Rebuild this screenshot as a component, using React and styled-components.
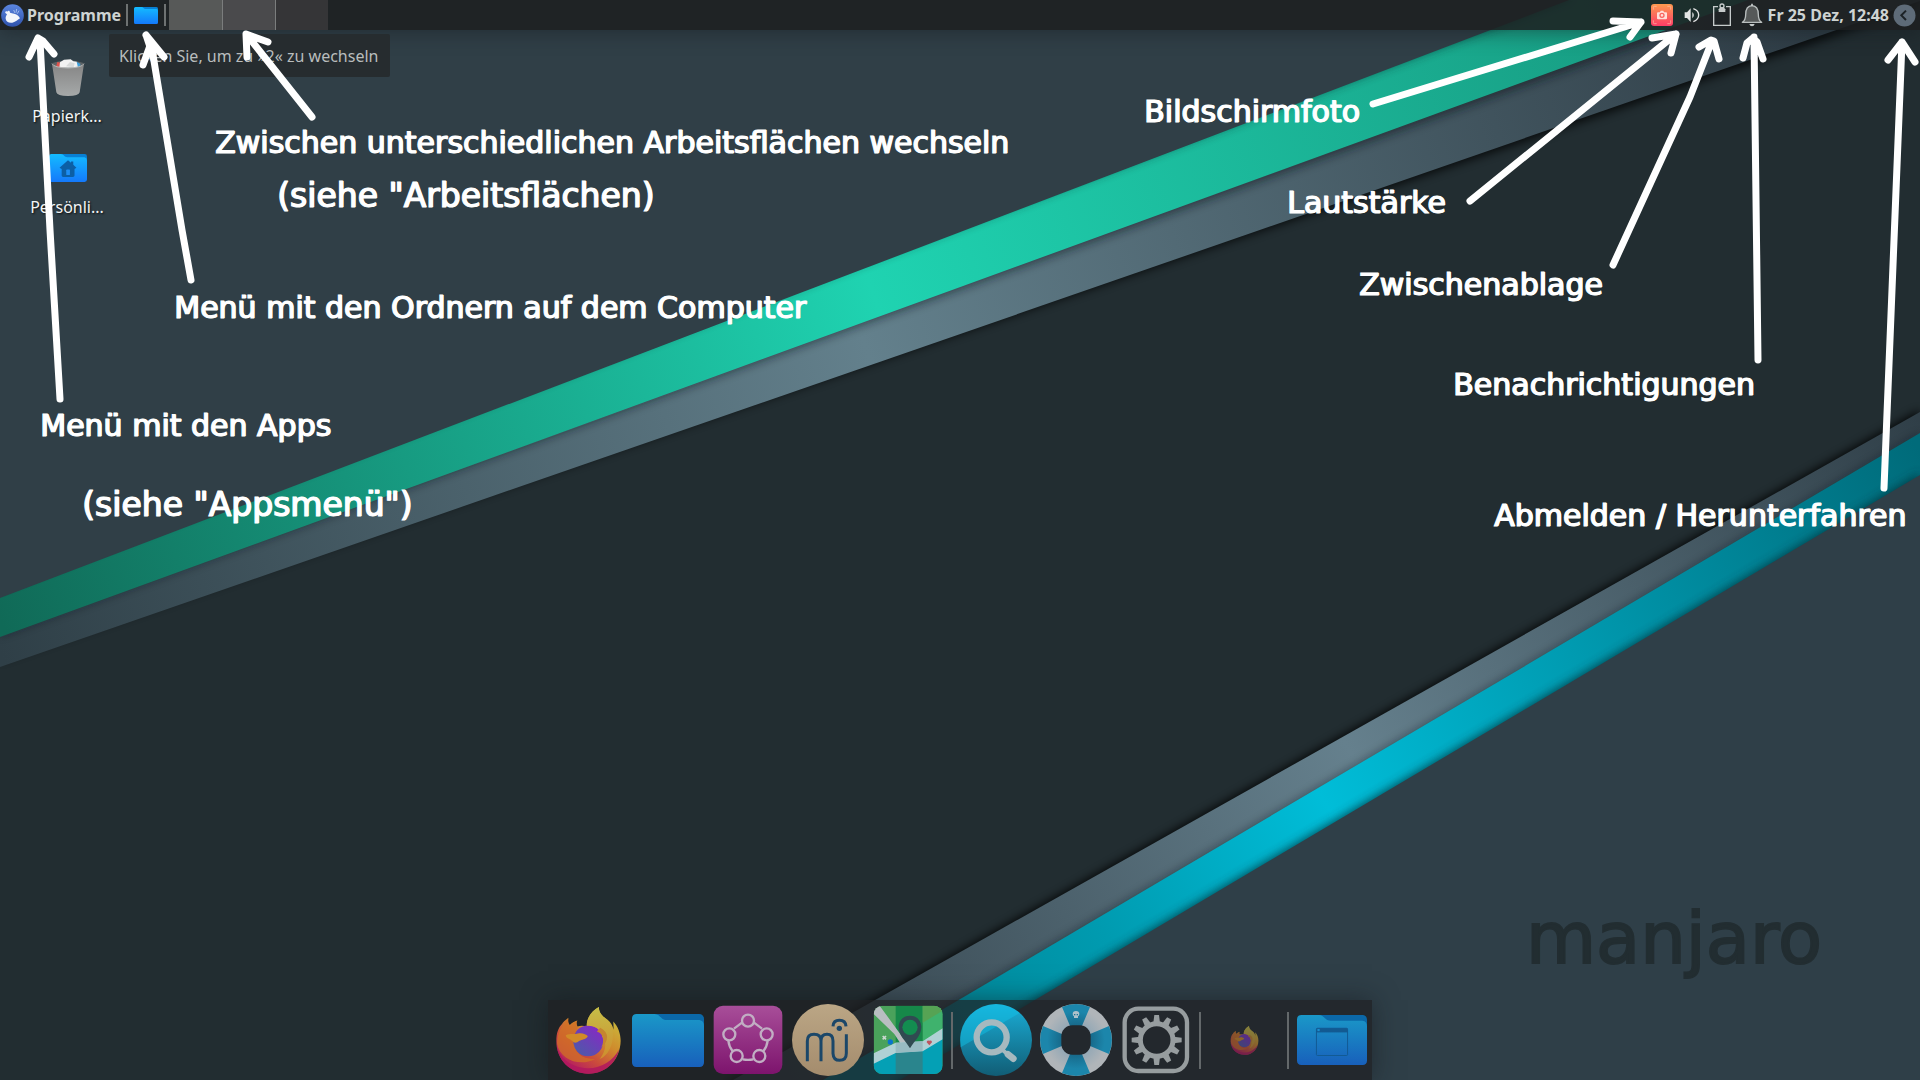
import React from 'react';
import styled, { createGlobalStyle } from 'styled-components';

const GlobalStyle = createGlobalStyle`
  * { box-sizing: border-box; }
  html, body, #root { height: 100%; }
  body { margin: 0; overflow: hidden; background: #222c30; font-family: "Noto Sans", "Open Sans", sans-serif; }
  button { font: inherit; color: inherit; background: none; border: 0; padding: 0; cursor: pointer; }
`;

const Screen = styled.div`
  position: relative;
  display: flex;
  flex-direction: column;
  width: 100%;
  height: 100vh;
  overflow: hidden;
`;

const WallpaperArt = styled.svg`
  position: absolute;
  inset: 0;
  width: 100%;
  height: 100%;
`;

const Wordmark = styled.div`
  position: absolute;
  right: 98px;
  bottom: 100px;
  font: 400 72px/84px "DejaVu Sans", sans-serif;
  color: #222d31;
  -webkit-text-stroke: 2px #222d31;
`;

const Panel = styled.header`
  position: relative;
  display: flex;
  align-items: center;
  height: 30px;
  background: rgba(29, 31, 32, 0.87);
  box-shadow: 0 2px 20px rgba(20, 26, 30, 0.5);
  color: #ced3d2;
  font-size: 16px;
  font-weight: 700;
  line-height: 22px;
  white-space: nowrap;
`;

const MenuButton = styled.button`
  display: flex;
  align-items: center;
  gap: 3px;
  padding: 0 5px 0 1px;
  height: 30px;
`;

const PanelRule = styled.span`
  width: 2px;
  height: 22px;
  background: #6e7272;
`;

const PlacesButton = styled.button`
  display: flex;
  align-items: center;
  justify-content: center;
  width: 36px;
  height: 30px;
`;

const Pager = styled.div`
  display: flex;
  height: 30px;
  margin-left: 3px;
`;

const Workspace = styled.button`
  width: 53px;
  height: 30px;
  background: ${(p) => p.$tone};
  & + & { border-left: 1px solid #7b7d7d; }
`;

const Tray = styled.div`
  display: flex;
  align-items: center;
  margin-left: auto;
  padding-right: 3px;
`;

const TrayButton = styled.button`
  display: flex;
  align-items: center;
  justify-content: center;
  width: 30px;
  height: 30px;
`;

const Clock = styled.button`
  height: 30px;
  padding: 0 4px 0 1px;
  font-weight: 700;
`;

const SessionButton = styled.button`
  display: flex;
  align-items: center;
  width: 24px;
  height: 30px;
`;

const Tooltip = styled.div`
  position: absolute;
  top: 34px;
  left: 109px;
  padding: 11px 12px 10px 10px;
  border-radius: 2px;
  background: #262c2f;
  color: #b9bdbd;
  font-size: 16px;
  line-height: 22px;
  white-space: nowrap;
`;

const DesktopArea = styled.main`
  position: relative;
  flex: 1;
  padding: 23px 12px;
`;

const IconColumn = styled.div`
  display: flex;
  flex-direction: column;
  gap: 17px;
  width: 110px;
`;

const DesktopItem = styled.button`
  display: flex;
  flex-direction: column;
  align-items: center;
  gap: 4px;
  color: #f3f5f5;
  font-size: 16px;
  line-height: 22px;
  text-shadow: 1px 1px 2px rgba(0, 0, 0, 0.8);
`;

const DockRow = styled.footer`
  position: relative;
  display: flex;
  justify-content: center;
`;

const Dock = styled.nav`
  display: flex;
  align-items: center;
  height: 80px;
  background: rgba(31, 32, 35, 0.72);
  box-shadow: 0 0 24px rgba(18, 22, 25, 0.5);
`;

const DockItem = styled.button`
  display: flex;
  align-items: center;
  justify-content: center;
  width: 80px;
  height: 80px;
  opacity: ${(p) => (p.$faded ? 0.6 : 1)};
`;

const DockRule = styled.span`
  width: 2px;
  height: 57px;
  margin: 0 3px;
  background: #63686a;
`;

const Notes = styled.section`
  position: absolute;
  top: 0;
  ${(p) => p.$side}: 0;
  width: ${(p) => p.$width}px;
  height: 540px;
  pointer-events: none;
`;

const Arrows = styled.svg`
  display: block;
  fill: none;
  stroke: #ffffff;
  stroke-width: 7;
  stroke-linecap: round;
  stroke-linejoin: round;
`;

const Note = styled.p`
  position: absolute;
  left: ${(p) => p.$x}px;
  top: ${(p) => p.$y}px;
  margin: 0;
  color: #ffffff;
  font-family: "DejaVu Sans", sans-serif;
  font-size: ${(p) => (p.$large ? 33 : 30)}px;
  line-height: ${(p) => (p.$large ? 40 : 36)}px;
  -webkit-text-stroke: 1px #ffffff;
  text-shadow: 1px 0 0 #ffffff;
  white-space: nowrap;
`;

function Wallpaper() {
  return (
    <WallpaperArt viewBox="0 0 1920 1080" preserveAspectRatio="xMidYMid slice" aria-hidden="true">
      <defs>
        <linearGradient id="green" gradientUnits="userSpaceOnUse" x1="0" y1="618" x2="1800" y2="-50">
          <stop offset="0" stopColor="#106a57" />
          <stop offset="0.485" stopColor="#1fd3b1" />
          <stop offset="1" stopColor="#169078" />
        </linearGradient>
        <linearGradient id="slateTop" gradientUnits="userSpaceOnUse" x1="0" y1="650" x2="1800" y2="10">
          <stop offset="0" stopColor="#2f3f47" />
          <stop offset="0.48" stopColor="#63808c" />
          <stop offset="1" stopColor="#2f3d46" />
        </linearGradient>
        <linearGradient id="teal" gradientUnits="userSpaceOnUse" x1="820" y1="1104" x2="1920" y2="453">
          <stop offset="0" stopColor="#007f90" />
          <stop offset="0.12" stopColor="#00899b" />
          <stop offset="0.26" stopColor="#009bb0" />
          <stop offset="0.46" stopColor="#00bdd8" />
          <stop offset="1" stopColor="#006b7a" />
        </linearGradient>
        <linearGradient id="slateLow" gradientUnits="userSpaceOnUse" x1="780" y1="1080" x2="1920" y2="423">
          <stop offset="0" stopColor="#33424b" />
          <stop offset="0.5" stopColor="#65808d" />
          <stop offset="1" stopColor="#303f48" />
        </linearGradient>
        <filter id="soft" filterUnits="userSpaceOnUse" x="-60" y="-60" width="2040" height="1200">
          <feGaussianBlur stdDeviation="5" />
        </filter>
      </defs>
      <rect width="1920" height="1080" fill="#222d31" />
      <path d="M0 660 L1920 7 V-50 H0Z" fill="#000" opacity="0.75" filter="url(#soft)" />
      <path d="M0 667 L1920 1 V0 H0Z" fill="url(#slateTop)" />
      <path d="M0 635 L1665 36 V-50 H0Z" fill="#10181c" opacity="0.55" filter="url(#soft)" />
      <path d="M0 637 L1748 0 H0Z" fill="url(#green)" />
      <path d="M0 588 L1568 0 V-50 H-50Z" fill="#10292a" opacity="0.6" filter="url(#soft)" />
      <path d="M0 598 L1569 0 H0Z" fill="#303f47" />
      <path d="M730 1080 L1920 410 V1150 H700Z" fill="#000" opacity="0.85" filter="url(#soft)" />
      <path d="M733 1080 L1920 412 V1080Z" fill="url(#slateLow)" />
      <path d="M822 1080 L1920 434 V1150 H780Z" fill="#10181c" opacity="0.5" filter="url(#soft)" />
      <path d="M823 1080 L1920 433 V1080Z" fill="url(#teal)" />
      <path d="M897 1080 L1920 473 V1150 H850Z" fill="#063740" opacity="0.8" filter="url(#soft)" />
      <path d="M900 1080 L1920 475 V1080Z" fill="#2f3f48" />
    </WallpaperArt>
  );
}

function XfceIcon() {
  return (
    <svg width="23" height="23" viewBox="0 0 69 69" aria-hidden="true">
      <defs>
        <linearGradient id="xfce" x1="0" y1="0" x2="0" y2="1">
          <stop offset="0" stopColor="#5b86e0" />
          <stop offset="1" stopColor="#2f52ab" />
        </linearGradient>
      </defs>
      <circle cx="34.500" cy="34.500" r="34" fill="url(#xfce)" />
      <path d="M14 28 C10 24 15 19 19 23 C21 19 27 20 27 26 L42 30 C50 32 54 38 57 43 C49 47 45 54 34 56 C24 58 15 53 14 44 C13 38 17 34 18 31Z" fill="#f3f6fb" />
      <path d="M38 18 l4 9 M47 15 l-2 11 M54 20 l-5 9" stroke="#9fb9ec" strokeWidth="3" fill="none" />
    </svg>
  );
}

function FolderIcon({ width, height, dim, children }) {
  const id = dim ? 'folderDim' : 'folder';
  return (
    <svg width={width} height={height} viewBox="0 0 216 158" preserveAspectRatio="none" aria-hidden="true">
      <defs>
        <linearGradient id={id} x1="0" y1="0" x2="0" y2="1">
          <stop offset="0" stopColor={dim ? '#1a98c8' : '#14bcff'} />
          <stop offset="1" stopColor={dim ? '#1860bb' : '#1479fb'} />
        </linearGradient>
      </defs>
      <rect x="60" y="0" width="156" height="90" rx="14" fill={dim ? '#0b68a8' : '#0880d4'} />
      <path d="M14 0 H68 C84 0 86 18 104 18 H202 Q216 20 216 36 V144 Q216 158 202 158 H14 Q0 158 0 144 V14 Q0 0 14 0Z" fill={`url(#${id})`} />
      {children}
    </svg>
  );
}

function TrashIcon() {
  return (
    <svg width="48" height="48" viewBox="-3 0 144 144" aria-hidden="true">
      <defs>
        <linearGradient id="bin" x1="0" y1="0" x2="0" y2="1">
          <stop offset="0" stopColor="#858585" />
          <stop offset="1" stopColor="#a6a9a9" />
        </linearGradient>
      </defs>
      <path d="M25 30 Q72 14 119 30 L117 44 H27Z" fill="#5d6366" />
      <path d="M36 42 L40 27 L54 30 L60 44Z" fill="#e0544f" />
      <path d="M92 42 L98 26 L109 32 L108 44Z" fill="#3f9ed8" />
      <path d="M46 44 L48 28 L60 20 L80 19 L88 25 L98 26 L102 44Z" fill="#f2f2f2" />
      <path d="M66 40 l12 -13 l14 4 l-3 12z" fill="#d7d9d9" />
      <path d="M24 32 Q30 44 72 45 Q114 44 120 32 L107 118 Q105 129 72 129 Q39 129 37 118Z" fill="url(#bin)" />
      <path d="M24 32 Q30 44 72 45 Q114 44 120 32" fill="none" stroke="#b5b8b8" strokeWidth="3" />
    </svg>
  );
}

function FirefoxIcon({ size, id }) {
  return (
    <svg width={size} height={size} viewBox="44 50 200 200" aria-hidden="true">
      <defs>
        <linearGradient id={`${id}body`} x1="0.850" y1="0.100" x2="0.250" y2="0.950">
          <stop offset="0" stopColor="#c9bd3d" />
          <stop offset="0.400" stopColor="#cf8a2c" />
          <stop offset="0.700" stopColor="#cb4b3c" />
          <stop offset="1" stopColor="#b41c62" />
        </linearGradient>
        <linearGradient id={`${id}flame`} x1="0" y1="0" x2="0" y2="1">
          <stop offset="0" stopColor="#c5be48" />
          <stop offset="1" stopColor="#cf8d2d" />
        </linearGradient>
        <linearGradient id={`${id}globe`} x1="0.900" y1="0.100" x2="0.200" y2="1">
          <stop offset="0" stopColor="#8629c5" />
          <stop offset="1" stopColor="#4c5ba8" />
        </linearGradient>
      </defs>
      <path d="M48 152 C48 128 54 112 65 101 C68 94 75 90 84 82 C82 92 84 98 88 104 C94 97 102 93 111 90 C107 96 108 101 111 108 C121 105 130 106 139 108 C137 84 155 60 175 50 C175 70 184 76 201 88 C210 95 216 105 219 118 L218 93 C232 107 240 130 240 151 C239 207 198 249 144 249 C90 249 48 207 48 152Z" fill={`url(#${id}body)`} />
      <path d="M49 166 C58 204 94 231 140 233 C184 234 219 209 235 177 C226 220 190 249 144 249 C94 249 55 215 49 166Z" fill="#b0185f" opacity="0.85" />
      <circle cx="143" cy="151" r="46" fill={`url(#${id}globe)`} />
      <path d="M139 106 C137 84 155 60 175 50 C174 76 205 85 214 112 C224 145 208 194 178 205 C192 185 203 160 184 137 C196 134 194 126 179 122 C169 109 155 106 139 106Z" fill={`url(#${id}flame)`} />
      <path d="M169 123 C188 128 193 151 182 172 C205 152 207 126 179 112Z" fill="#c58530" />
      <path d="M50 158 C51 130 60 111 84 84 C82 94 84 101 90 106 C97 97 103 94 110 91 C106 100 109 106 112 111 L98 145 C99 188 128 207 164 205 C121 228 59 211 50 158Z" fill="#d07025" opacity="0.75" />
      <path d="M76 134 C90 128 102 133 112 129 C125 126 137 131 142 137 C136 148 124 146 117 151 C108 158 101 159 95 151 C89 144 77 144 76 134Z" fill="#d28b27" />
    </svg>
  );
}

function FriendsIcon() {
  return (
    <svg width="70" height="70" viewBox="519 45 210 210" aria-hidden="true">
      <defs>
        <linearGradient id="magenta" x1="0" y1="0" x2="0" y2="1">
          <stop offset="0" stopColor="#a84e99" />
          <stop offset="1" stopColor="#7d146d" />
        </linearGradient>
      </defs>
      <rect x="521" y="47" width="206" height="205" rx="28" fill="url(#magenta)" />
      <g fill="none" stroke="#c1aec3" strokeWidth="7">
        <path d="M606 98 L582 116 M642 98 L666 116 M565 152 Q567 170 578 184 M683 152 Q681 170 670 184 M608 208 Q624 211 640 208" />
        <circle cx="624" cy="92" r="18" />
        <circle cx="568" cy="133" r="18" />
        <circle cx="680" cy="133" r="18" />
        <circle cx="590" cy="198" r="18" />
        <circle cx="658" cy="198" r="18" />
      </g>
    </svg>
  );
}

function ScoreIcon() {
  return (
    <svg width="72" height="72" viewBox="756 42 216 216" aria-hidden="true">
      <defs>
        <linearGradient id="sand" x1="0" y1="0" x2="0" y2="1">
          <stop offset="0" stopColor="#bba685" />
          <stop offset="1" stopColor="#a48c6d" />
        </linearGradient>
      </defs>
      <circle cx="864" cy="150" r="108" fill="url(#sand)" />
      <g fill="none" stroke="#1b4769" strokeWidth="9">
        <path d="M802 214 V153 Q802 133 822 133 Q843 133 843 153 V214 M843 153 Q843 133 861 133 Q879 133 879 153 V190 Q880 211 899 211 Q919 211 919 190 V133" />
        <path d="M879 109 Q880 91 898 91 Q917 91 918 109" />
      </g>
      <circle cx="898" cy="115" r="8" fill="#1b4769" />
    </svg>
  );
}

function MapsIcon() {
  return (
    <svg width="70" height="70" viewBox="999 45 210 210" aria-hidden="true">
      <defs>
        <clipPath id="mapCard"><rect x="1001" y="47" width="207" height="205" rx="26" /></clipPath>
      </defs>
      <g clipPath="url(#mapCard)">
        <rect x="1001" y="47" width="207" height="205" fill="#4aa25b" />
        <path d="M1148 47 H1208 V120 L1148 160Z" fill="#3fb26d" />
        <path d="M1067 47 H1148 V160 H1067Z" fill="#168849" />
        <path d="M1148 47 H1208 V62 L1148 98Z" fill="#56a354" />
        <path d="M1001 200 L1067 165 L1148 158 L1208 120 V252 H1001Z" fill="#04a0b5" />
        <path d="M1001 47 H1019 L1085 138 L1101 158 L1083 163 L1063 132 L1001 72Z" fill="#b9bec1" />
        <path d="M1001 190 L1067 158 L1148 154 L1208 115 V148 L1148 184 L1067 189 L1001 221Z" fill="#b0d1d5" />
        <path d="M1067 189 L1148 184 V252 H1067Z" fill="#2a858d" />
        <path d="M1067 158 L1148 154 V184 L1067 189Z" fill="#98bbc2" />
        <path d="M1110 77 C1130 77 1144 92 1144 111 C1144 137 1124 151 1110 175 C1096 151 1076 137 1076 111 C1076 92 1090 77 1110 77Z" fill="#304a51" />
        <circle cx="1110" cy="112" r="23" fill="#138d50" />
        <path d="M1028 138 l10 10 m0 -10 l-10 10" stroke="#c9d7ce" strokeWidth="5" />
        <circle cx="1051" cy="156" r="8" fill="#0874cd" />
        <path d="M1168 166 l-8 -9 q0 -8 8 -5 q8 -3 8 5z" fill="#bd555f" />
      </g>
    </svg>
  );
}

function SearchIcon() {
  return (
    <svg width="72" height="72" viewBox="60 42 216 216" aria-hidden="true">
      <defs>
        <linearGradient id="lens" x1="0" y1="0" x2="0" y2="1">
          <stop offset="0" stopColor="#1aaed7" />
          <stop offset="1" stopColor="#115d75" />
        </linearGradient>
      </defs>
      <circle cx="168" cy="150" r="108" fill="url(#lens)" />
      <path d="M61 142 A108 108 0 0 1 239 69 L62 172Z" fill="#12c5ec" opacity="0.45" />
      <circle cx="155" cy="142" r="45" fill="none" stroke="#a6b9bf" strokeWidth="19" />
      <path d="M184 177 L220 207" stroke="#a6b9bf" strokeWidth="12" />
      <path d="M204 193 L220 206" stroke="#a6b9bf" strokeWidth="20" strokeLinecap="round" />
    </svg>
  );
}

function RescueIcon() {
  return (
    <svg width="72" height="72" viewBox="300 42 216 216" aria-hidden="true">
      <defs>
        <radialGradient id="ringBlue" gradientUnits="userSpaceOnUse" cx="408" cy="150" r="108">
          <stop offset="0.400" stopColor="#17698a" />
          <stop offset="0.800" stopColor="#1c86ab" />
        </radialGradient>
        <radialGradient id="ringGrey" gradientUnits="userSpaceOnUse" cx="408" cy="150" r="108">
          <stop offset="0.400" stopColor="#92a7b5" />
          <stop offset="0.850" stopColor="#b0b5b9" />
        </radialGradient>
        <mask id="ring">
          <rect x="300" y="42" width="216" height="216" fill="#fff" />
          <rect x="364" y="106" width="88" height="88" rx="33" fill="#000" />
        </mask>
      </defs>
      <g mask="url(#ring)">
        <circle cx="408" cy="150" r="108" fill="url(#ringGrey)" />
        <path d="M408 150 L366 51 A108 108 0 0 1 450 51Z M408 150 L366 249 A108 108 0 0 0 450 249Z M408 150 L309 108 A108 108 0 0 0 309 192Z M408 150 L507 108 A108 108 0 0 1 507 192Z" fill="url(#ringBlue)" />
      </g>
      <path d="M398 72 q0 -9 10 -9 q10 0 10 9 q0 6 -4 7 v5 h-12 v-5 q-4 -1 -4 -7z" fill="#adc1ca" />
      <path d="M402 72 h4 v4 h-4z M410 72 h4 v4 h-4z" fill="#1c7597" />
    </svg>
  );
}

function SettingsIcon() {
  const teeth = Array.from({ length: 12 }, (_, i) => i * 30);
  return (
    <svg width="68" height="68" viewBox="546 48 204 204" aria-hidden="true">
      <rect x="554" y="56" width="187" height="187" rx="41" fill="none" stroke="#979d9f" strokeWidth="13" />
      <circle cx="650" cy="150" r="49" fill="none" stroke="#979d9f" strokeWidth="15" />
      {teeth.map((angle) => (
        <path key={angle} d="M640 99 L643 75 H657 L660 99Z" fill="#979d9f" transform={`rotate(${angle} 650 150)`} />
      ))}
    </svg>
  );
}

function CameraIcon() {
  return (
    <svg width="22" height="22" viewBox="0 0 66 66" aria-hidden="true">
      <defs>
        <linearGradient id="shot" x1="0" y1="0" x2="0" y2="1">
          <stop offset="0" stopColor="#fd9a4f" />
          <stop offset="1" stopColor="#fb3d67" />
        </linearGradient>
      </defs>
      <rect width="66" height="66" rx="9" fill="url(#shot)" />
      <path d="M7 17 V10 Q7 7 10 7 H17 M49 7 H56 Q59 7 59 10 V17 M59 49 V56 Q59 59 56 59 H49 M17 59 H10 Q7 59 7 56 V49" fill="none" stroke="#ffc0a8" strokeWidth="2" />
      <path d="M21 25 H27 L29 20 H37 L39 25 H45 Q48 25 48 28 V43 Q48 46 45 46 H21 Q18 46 18 43 V28 Q18 25 21 25Z" fill="#ffe1da" />
      <circle cx="33" cy="34" r="6" fill="none" stroke="#fa6560" strokeWidth="4" />
    </svg>
  );
}

function VolumeIcon() {
  return (
    <svg width="22" height="22" viewBox="0 0 66 66" aria-hidden="true">
      <path d="M11 25 H18 L29 13 V54 L18 42 H11Z" fill="#e3e5e5" />
      <path d="M34 24 Q43 33 34 43" fill="#e3e5e5" />
      <path d="M37 14 Q53 20 53 33 Q53 47 37 53" fill="none" stroke="#e3e5e5" strokeWidth="4" />
    </svg>
  );
}

function ClipboardIcon() {
  return (
    <svg width="20" height="24" viewBox="0 0 60 72" aria-hidden="true">
      <path d="M18 11 H5 V67 H55 V11 H42" fill="none" stroke="#c6cbcb" strokeWidth="4" />
      <path d="M20 27 V19 L25 13 H35 L40 19 V27Z" fill="#c6cbcb" />
      <circle cx="30" cy="9" r="6" fill="none" stroke="#c6cbcb" strokeWidth="4" />
    </svg>
  );
}

function BellIcon() {
  return (
    <svg width="22" height="24" viewBox="0 0 66 72" aria-hidden="true">
      <path d="M4 58 Q14 51 14 35 Q14 9 33 8 Q52 9 52 35 Q52 51 62 58Z" fill="#565959" stroke="#b9bebe" strokeWidth="4" strokeLinejoin="round" />
      <path d="M33 2 V9" stroke="#c6cbcb" strokeWidth="5" />
      <path d="M25 63 H41 Q39 70 33 70 Q27 70 25 63Z" fill="#c6cbcb" />
    </svg>
  );
}

function SessionIcon() {
  return (
    <svg width="23" height="23" viewBox="0 0 69 69" aria-hidden="true">
      <circle cx="34.500" cy="34.500" r="33" fill="#5e6b78" />
      <path d="M39 20 L25 34 L39 48" fill="none" stroke="#1c2226" strokeWidth="6" />
    </svg>
  );
}

const leftNotes = [
  { text: 'Zwischen unterschiedlichen Arbeitsflächen wechseln', x: 215, y: 125 },
  { text: '(siehe "Arbeitsflächen)', x: 277, y: 176, large: true },
  { text: 'Menü mit den Ordnern auf dem Computer', x: 174, y: 290 },
  { text: 'Menü mit den Apps', x: 40, y: 408 },
  { text: '(siehe "Appsmenü")', x: 82, y: 485, large: true },
];

const rightNotes = [
  { text: 'Bildschirmfoto', x: 24, y: 94 },
  { text: 'Lautstärke', x: 167, y: 185 },
  { text: 'Zwischenablage', x: 239, y: 267 },
  { text: 'Benachrichtigungen', x: 333, y: 367 },
  { text: 'Abmelden / Herunterfahren', x: 374, y: 498 },
];

const workspaces = ['#575958', '#4a4a4c', '#353537'];

export default function App() {
  return (
    <Screen>
      <GlobalStyle />
      <Wallpaper />
      <Wordmark>manjaro</Wordmark>

      <Panel>
        <MenuButton><XfceIcon />Programme</MenuButton>
        <PanelRule />
        <PlacesButton aria-label="Orte"><FolderIcon width={24} height={17} /></PlacesButton>
        <PanelRule />
        <Pager>
          {workspaces.map((tone, i) => (
            <Workspace key={tone} $tone={tone} aria-label={`Arbeitsfläche ${i + 1}`} />
          ))}
        </Pager>
        <Tray>
          <TrayButton aria-label="Bildschirmfoto"><CameraIcon /></TrayButton>
          <TrayButton aria-label="Lautstärke"><VolumeIcon /></TrayButton>
          <TrayButton aria-label="Zwischenablage"><ClipboardIcon /></TrayButton>
          <TrayButton aria-label="Benachrichtigungen"><BellIcon /></TrayButton>
          <Clock>Fr 25 Dez, 12:48</Clock>
          <SessionButton aria-label="Abmelden"><SessionIcon /></SessionButton>
        </Tray>
      </Panel>

      <DesktopArea>
        <IconColumn>
          <DesktopItem><TrashIcon />Papierk...</DesktopItem>
          <DesktopItem>
            <svg width="48" height="48" viewBox="0 0 48 48" aria-hidden="true">
              <g transform="translate(6 10)">
                <FolderIcon width={38} height={28}>
                  <path d="M108 35 L125 49 V42 H138 V61 L156 78 L145 84 V122 Q145 130 136 130 H80 Q72 130 72 122 V84 L60 78Z" fill="#0c5fa5" />
                  <rect x="98" y="88" width="21" height="31" rx="4" fill="#1d8ef5" />
                </FolderIcon>
              </g>
            </svg>
            Persönli...
          </DesktopItem>
        </IconColumn>
      </DesktopArea>

      <DockRow>
        <Dock aria-label="Dock">
          <DockItem aria-label="Firefox"><FirefoxIcon size={67} id="fx" /></DockItem>
          <DockItem aria-label="Dateien"><FolderIcon width={72} height={53} dim /></DockItem>
          <DockItem aria-label="Freunde"><FriendsIcon /></DockItem>
          <DockItem aria-label="MuseScore"><ScoreIcon /></DockItem>
          <DockItem aria-label="Karten"><MapsIcon /></DockItem>
          <DockRule />
          <DockItem aria-label="Suche"><SearchIcon /></DockItem>
          <DockItem aria-label="Hilfe"><RescueIcon /></DockItem>
          <DockItem aria-label="Einstellungen"><SettingsIcon /></DockItem>
          <DockRule />
          <DockItem aria-label="Firefox-Fenster" $faded><FirefoxIcon size={29} id="fxs" /></DockItem>
          <DockRule />
          <DockItem aria-label="Schreibtisch">
            <FolderIcon width={70} height={50} dim>
              <rect x="60" y="42" width="96" height="86" rx="3" fill="none" stroke="#125a92" strokeWidth="3" />
              <path d="M60 42 H156 V55 H60Z" fill="#125a92" />
              <rect x="63" y="44" width="7" height="7" fill="#1a8fd0" />
            </FolderIcon>
          </DockItem>
        </Dock>
      </DockRow>

      <Tooltip role="tooltip">Klicken Sie, um zu »2« zu wechseln</Tooltip>

      <Notes $side="left" $width={1060}>
        <Arrows width="1060" height="540" viewBox="0 0 1060 540" aria-hidden="true">
          <path d="M60 399 L50 230 L40 41 M29 57 L38 38 L43 41 L54 54" />
          <path d="M191 280 L182 230 L151 43 L143 65 M146 35 L164 57 M146 35 L151 50" />
          <path d="M312 117 L247 35 M247 57 L246 34 L268 42" />
        </Arrows>
        {leftNotes.map((n) => (
          <Note key={n.text} $x={n.x} $y={n.y} $large={n.large}>{n.text}</Note>
        ))}
      </Notes>

      <Notes $side="right" $width={800}>
        <Arrows width="800" height="540" viewBox="1120 0 800 540" aria-hidden="true">
          <path d="M1373 104 L1641 22 M1613 21 L1641 22 L1630 37" />
          <path d="M1470 201 L1676 34 M1652 38 L1676 34 L1671 53" />
          <path d="M1613 265 L1690 97 L1712 41 M1699 47 L1711 40 L1714 41 L1719 59" />
          <path d="M1758 360 L1754 37 M1743 58 L1747 43 L1753 38 L1757 42 L1763 59" />
          <path d="M1884 488 L1902 42 M1888 60 L1902 42 L1915 62" />
        </Arrows>
        {rightNotes.map((n) => (
          <Note key={n.text} $x={n.x} $y={n.y} $large={n.large}>{n.text}</Note>
        ))}
      </Notes>
    </Screen>
  );
}
